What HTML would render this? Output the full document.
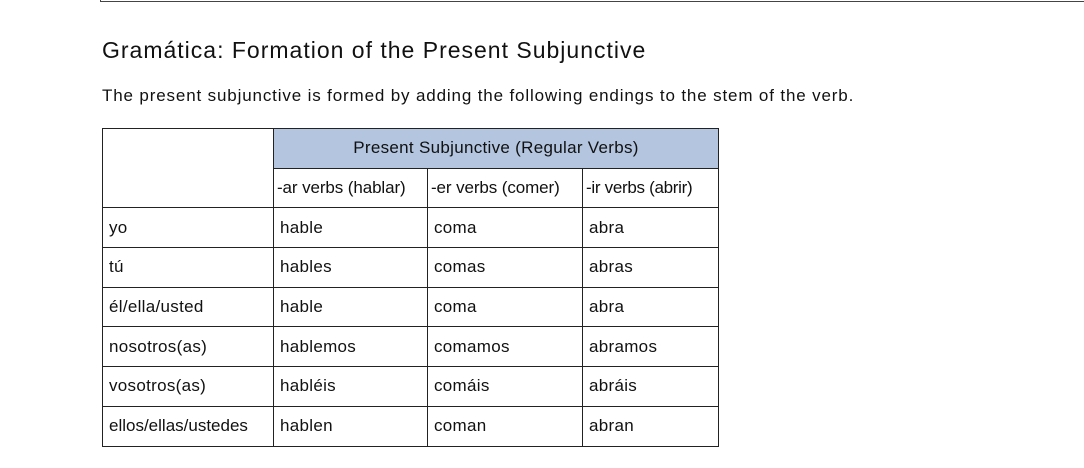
<!DOCTYPE html>
<html><head><meta charset="utf-8"><style>
body{margin:0;width:1084px;height:468px;background:#fff;position:relative;overflow:hidden;font-family:"Liberation Sans",Arial,sans-serif;color:#111}
.box{position:absolute;left:100px;top:-10px;width:1000px;height:10px;border:1.5px solid #444}
h1{position:absolute;left:102px;top:37px;margin:0;font-size:23px;font-weight:normal;letter-spacing:1px;white-space:nowrap}
p{position:absolute;left:102px;top:86px;margin:0;font-size:17px;letter-spacing:0.85px;white-space:nowrap}
table{position:absolute;left:102px;top:128px;border-collapse:collapse;font-size:17px;letter-spacing:0.3px;table-layout:fixed;width:616px}
td{border:1.5px solid #222;height:38px;padding:0 0 0 6px;white-space:nowrap;overflow:hidden;box-sizing:border-box}
tr{height:39.7px}
.hd{background:#b3c5df;text-align:center;padding:0}
</style></head><body>
<div class="box"></div>
<h1>Gramática: Formation of the Present Subjunctive</h1>
<p>The present subjunctive is formed by adding the following endings to the stem of the verb.</p>
<table>
<colgroup><col style="width:171px"><col style="width:154px"><col style="width:155px"><col style="width:136px"></colgroup>
<tr><td rowspan="2"></td><td colspan="3" class="hd">Present Subjunctive (Regular Verbs)</td></tr>
<tr><td style="padding-left:3px;letter-spacing:-0.1px">-ar verbs (hablar)</td><td style="padding-left:3px;letter-spacing:-0.1px">-er verbs (comer)</td><td style="padding-left:3px;letter-spacing:-0.3px">-ir verbs (abrir)</td></tr>
<tr><td>yo</td><td>hable</td><td>coma</td><td>abra</td></tr>
<tr><td>tú</td><td>hables</td><td>comas</td><td>abras</td></tr>
<tr><td>él/ella/usted</td><td>hable</td><td>coma</td><td>abra</td></tr>
<tr><td>nosotros(as)</td><td>hablemos</td><td>comamos</td><td>abramos</td></tr>
<tr><td>vosotros(as)</td><td>habléis</td><td>comáis</td><td>abráis</td></tr>
<tr><td style="letter-spacing:0px">ellos/ellas/ustedes</td><td>hablen</td><td>coman</td><td>abran</td></tr>
</table>
</body></html>
